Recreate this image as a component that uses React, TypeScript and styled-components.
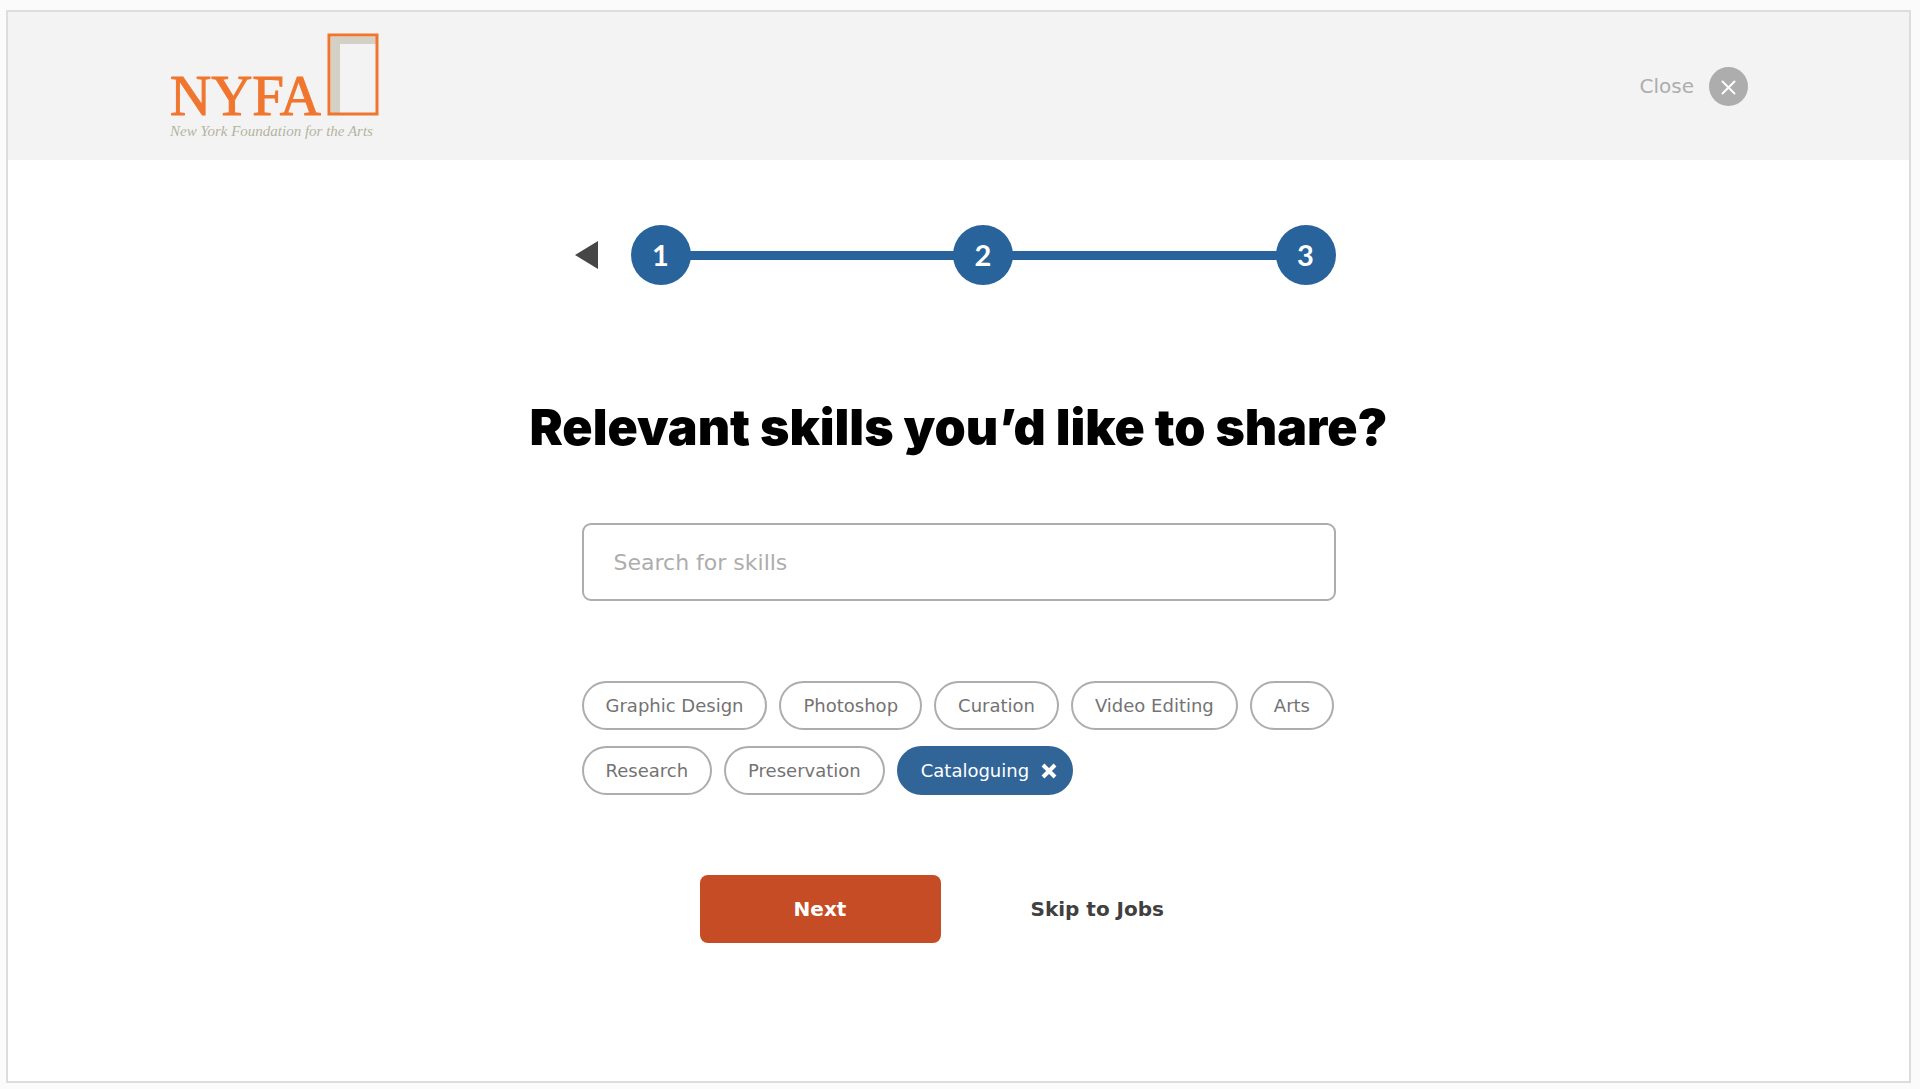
import React, { useState } from "react";
import styled, { createGlobalStyle } from "styled-components";

const sans = `Verdana, "DejaVu Sans", sans-serif`;
const blue = "#28639b";
const grey = "#adadad";

const GlobalStyle = createGlobalStyle`
  *, *::before, *::after { box-sizing: border-box; }
  body {
    margin: 0;
    background: #fbfbfb;
    font-family: ${sans};
  }
  button, input { font-family: inherit; }
`;

const Shell = styled.div`
  display: flex;
  min-height: 100vh;
  padding: 10px 9px 6px 6px;
`;

const Frame = styled.div`
  flex: 1;
  display: flex;
  flex-direction: column;
  border: 2px solid #dddddd;
  background: #ffffff;
`;

const Header = styled.header`
  display: flex;
  align-items: center;
  justify-content: space-between;
  padding: 20px 161px;
  background: #f3f3f3;
`;

const LogoLink = styled.a`
  display: block;
  svg { display: block; }
`;

const LogoName = styled.text`
  font: 57px "Liberation Serif", serif;
  fill: #f0762f;
  stroke: #f0762f;
  stroke-width: 1px;
`;

const LogoTagline = styled.text`
  font: italic 15px "Liberation Serif", serif;
  fill: #b5b3a0;
`;

const CloseButton = styled.button`
  display: flex;
  align-items: center;
  gap: 15px;
  padding: 0;
  border: 0;
  background: none;
  color: ${grey};
  font-size: 20px;
  line-height: 24px;
  cursor: pointer;
  svg { display: block; }
`;

const Main = styled.main`
  display: flex;
  flex-direction: column;
  align-items: center;
  padding: 65px 24px;
`;

const Column = styled.div`
  width: 100%;
  max-width: 754px;
`;

const Stepper = styled.nav`
  display: flex;
  align-items: center;
  margin-left: -8px;
`;

const BackButton = styled.button`
  padding: 0;
  margin-right: 33px;
  border: 0;
  background: none;
  cursor: pointer;
  svg { display: block; }
`;

const Steps = styled.ol`
  flex: 1;
  display: flex;
  align-items: center;
  margin: 0;
  padding: 0;
  list-style: none;
`;

const Step = styled.li`
  display: flex;
  align-items: center;
  &:not(:first-child) { flex: 1; }
  &:not(:first-child)::before {
    content: "";
    flex: 1;
    height: 9px;
    margin: 0 -1px;
    background: ${blue};
  }
`;

const StepDot = styled.span`
  display: flex;
  align-items: center;
  justify-content: center;
  width: 60px;
  height: 60px;
  border-radius: 50%;
  background: ${blue};
  color: #ffffff;
  font: bold 29px/32px Lato, sans-serif;
`;

const Title = styled.h1`
  margin: 108px 0 62px;
  color: #000000;
  font: 900 50px/68px Inter, sans-serif;
  text-align: center;
`;

const SearchBox = styled.input`
  display: block;
  width: 100%;
  height: 78px;
  padding: 0 30px;
  border: 2px solid ${grey};
  border-radius: 9px;
  background: #ffffff;
  color: #444444;
  font-size: 22px;
  &::placeholder { color: ${grey}; opacity: 1; }
`;

const Chips = styled.div`
  display: flex;
  flex-wrap: wrap;
  gap: 16px 12px;
  margin-top: 80px;
`;

const Chip = styled.button<{ $selected: boolean }>`
  display: flex;
  align-items: center;
  gap: 12px;
  height: 49px;
  padding: ${(p) => (p.$selected ? "0 14px 0 22px" : "0 22px")};
  border: 2px solid ${(p) => (p.$selected ? "#316598" : grey)};
  border-radius: 25px;
  background: ${(p) => (p.$selected ? "#316598" : "#ffffff")};
  color: ${(p) => (p.$selected ? "#ffffff" : "#737373")};
  font-size: 18px;
  line-height: 24px;
  white-space: nowrap;
  cursor: pointer;
`;

const Actions = styled.div`
  display: flex;
  align-items: center;
  gap: 90px;
  margin-top: 80px;
  padding-left: 118px;
`;

const NextButton = styled.button`
  width: 241px;
  height: 68px;
  border: 0;
  border-radius: 8px;
  background: #c64c25;
  color: #ffffff;
  font-size: 20px;
  font-weight: bold;
  cursor: pointer;
`;

const SkipLink = styled.a`
  color: #404040;
  font-size: 20px;
  font-weight: bold;
  text-decoration: none;
`;

const skills = [
  "Graphic Design",
  "Photoshop",
  "Curation",
  "Video Editing",
  "Arts",
  "Research",
  "Preservation",
  "Cataloguing",
];

function Logo() {
  return (
    <svg width="212" height="108" viewBox="0 0 212 108" role="img" aria-label="NYFA, New York Foundation for the Arts">
      <path d="M162 5h45v7h-36v70h-9z" fill="#d3d0c5" />
      <rect x="160" y="3" width="48" height="79" fill="none" stroke="#f0762f" strokeWidth="3" />
      <LogoName x="1" y="83">NYFA</LogoName>
      <LogoTagline x="1" y="104">New York Foundation for the Arts</LogoTagline>
    </svg>
  );
}

export default function App() {
  const [selected, setSelected] = useState<string[]>(["Cataloguing"]);
  const toggle = (skill: string) =>
    setSelected((now) => (now.includes(skill) ? now.filter((s) => s !== skill) : [...now, skill]));

  return (
    <>
      <GlobalStyle />
      <Shell>
        <Frame>
          <Header>
            <LogoLink href="#home">
              <Logo />
            </LogoLink>
            <CloseButton type="button">
              Close
              <svg width="39" height="39" viewBox="0 0 39 39" aria-hidden="true">
                <circle cx="19.500" cy="19.500" r="19.500" fill={grey} />
                <path d="M13.500 14.500l12 12M25.500 14.500l-12 12" stroke="#fff" strokeWidth="2" strokeLinecap="round" />
              </svg>
            </CloseButton>
          </Header>
          <Main>
            <Column>
              <Stepper aria-label="Progress">
                <BackButton type="button" aria-label="Back">
                  <svg width="24" height="28" viewBox="0 0 24 28" aria-hidden="true">
                    <path d="M24 0v28L1 14z" fill="#464646" />
                  </svg>
                </BackButton>
                <Steps>
                  {[1, 2, 3].map((n) => (
                    <Step key={n}>
                      <StepDot>{n}</StepDot>
                    </Step>
                  ))}
                </Steps>
              </Stepper>
            </Column>
            <Title>Relevant skills you’d like to share?</Title>
            <Column>
              <SearchBox type="search" aria-label="Search for skills" placeholder="Search for skills" />
              <Chips>
                {skills.map((skill) => {
                  const on = selected.includes(skill);
                  return (
                    <Chip key={skill} type="button" $selected={on} aria-pressed={on} onClick={() => toggle(skill)}>
                      {skill}
                      {on && (
                        <svg width="16" height="16" viewBox="0 0 16 16" aria-hidden="true">
                          <path d="M2 2l12 12M14 2L2 14" stroke="#fff" strokeWidth="4" />
                        </svg>
                      )}
                    </Chip>
                  );
                })}
              </Chips>
              <Actions>
                <NextButton type="button">Next</NextButton>
                <SkipLink href="#jobs">Skip to Jobs</SkipLink>
              </Actions>
            </Column>
          </Main>
        </Frame>
      </Shell>
    </>
  );
}
